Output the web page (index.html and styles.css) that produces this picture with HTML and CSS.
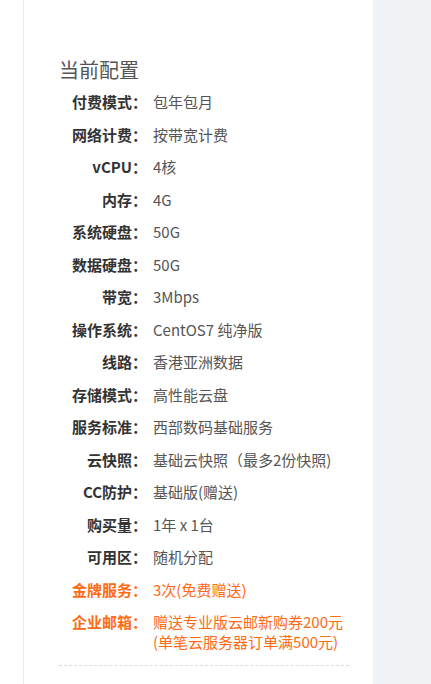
FILE: index.html
```html
<!DOCTYPE html>
<html lang="zh-CN">
<head>
<meta charset="utf-8">
<link rel="stylesheet" href="styles.css">
</head>
<body>
<div class="page">
  <div class="gutter"></div>
  <div class="panel">
    <h2 class="title">当前配置</h2>
    <div class="rows">
      <div class="row"><span class="label">付费模式：</span><span class="value">包年包月</span></div>
      <div class="row"><span class="label">网络计费：</span><span class="value">按带宽计费</span></div>
      <div class="row"><span class="label">vCPU：</span><span class="value">4核</span></div>
      <div class="row"><span class="label">内存：</span><span class="value">4G</span></div>
      <div class="row"><span class="label">系统硬盘：</span><span class="value">50G</span></div>
      <div class="row"><span class="label">数据硬盘：</span><span class="value">50G</span></div>
      <div class="row"><span class="label">带宽：</span><span class="value">3Mbps</span></div>
      <div class="row"><span class="label">操作系统：</span><span class="value">CentOS7 纯净版</span></div>
      <div class="row"><span class="label">线路：</span><span class="value">香港亚洲数据</span></div>
      <div class="row"><span class="label">存储模式：</span><span class="value">高性能云盘</span></div>
      <div class="row"><span class="label">服务标准：</span><span class="value">西部数码基础服务</span></div>
      <div class="row"><span class="label">云快照：</span><span class="value">基础云快照（最多2份快照)</span></div>
      <div class="row"><span class="label">CC防护：</span><span class="value">基础版(赠送)</span></div>
      <div class="row"><span class="label">购买量：</span><span class="value">1年 x 1台</span></div>
      <div class="row"><span class="label">可用区：</span><span class="value">随机分配</span></div>
      <div class="row hot"><span class="label">金牌服务：</span><span class="value">3次(免费赠送)</span></div>
      <div class="row hot"><span class="label">企业邮箱：</span><span class="value">赠送专业版云邮新购券200元<br>(单笔云服务器订单满500元)</span></div>
    </div>
    <div class="divider"></div>
    <div class="rows">
      <div class="row hot"><span class="label">优惠活动：</span><span class="value">新用户专享</span></div>
    </div>
  </div>
  <div class="side"></div>
</div>
</body>
</html>
```
FILE: styles.css
```css
html, body {
  margin: 0;
  padding: 0;
  background: #fff;
  font-family: "Microsoft YaHei", "Noto Sans CJK SC", "Noto Sans", sans-serif;
}
.page {
  display: flex;
  min-height: 684px;
}
.gutter {
  width: 23px;
  flex: none;
}
.panel {
  width: 290px;
  flex: none;
  border-left: 1px solid #ececec;
  padding: 58px 24px 0 35px;
}
.side {
  flex: 1;
  background: #eff3f5;
}
.title {
  margin: 0 0 4px 0;
  font-size: 20px;
  font-weight: normal;
  line-height: 24px;
  color: #555;
}
.rows {
  display: flex;
  flex-direction: column;
}
.row {
  display: flex;
  padding: 6.25px 0;
  font-size: 15px;
  line-height: 20px;
  color: #555;
}
.label {
  width: 88px;
  flex: none;
  text-align: right;
  font-weight: bold;
  color: #333;
}
.value {
  margin-left: 6px;
}
.hot .label, .hot .value {
  color: #ff6a13;
}
.divider {
  border-top: 1px dashed #ddd;
  margin: 6px 0 12px 0;
}
```
